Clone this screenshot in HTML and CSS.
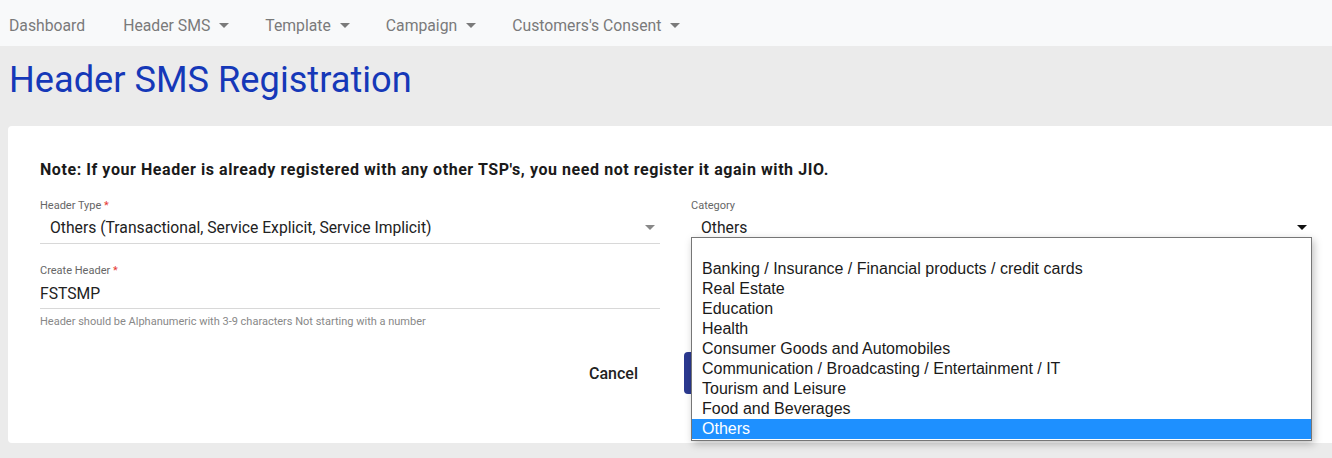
FILE: index.html
```html
<!DOCTYPE html>
<html lang="en">
<head>
  <meta charset="UTF-8" />
  <meta name="viewport" content="width=device-width, initial-scale=1" />
  <title>Header SMS Registration</title>
  <link rel="stylesheet" href="styles.css">
</head>
<body>
  <nav class="topnav">
    <a class="nav-item first">Dashboard</a>
    <a class="nav-item dropdown">Header SMS</a>
    <a class="nav-item dropdown">Template</a>
    <a class="nav-item dropdown">Campaign</a>
    <a class="nav-item dropdown">Customers's Consent</a>
  </nav>

  <h1 class="page-title">Header SMS Registration</h1>

  <div class="card">
    <p class="note">Note: If your Header is already registered with any other TSP's, you need not register it again with JIO.</p>

    <div class="form-grid">
      <div class="field">
        <label class="field-label">Header Type <span class="req">*</span></label>
        <div class="select-box indent">
          <span>Others (Transactional, Service Explicit, Service Implicit)</span>
          <span class="caret grey"></span>
        </div>
      </div>

      <div class="field category">
        <label class="field-label">Category</label>
        <div class="select-box indent plain">
          <span>Others</span>
          <span class="caret dark"></span>
        </div>

        <!-- open list of the category select -->
        <ul class="option-list">
          <li>&nbsp;</li>
          <li>Banking / Insurance / Financial products / credit cards</li>
          <li>Real Estate</li>
          <li>Education</li>
          <li>Health</li>
          <li>Consumer Goods and Automobiles</li>
          <li>Communication / Broadcasting / Entertainment / IT</li>
          <li>Tourism and Leisure</li>
          <li>Food and Beverages</li>
          <li class="selected">Others</li>
        </ul>
      </div>

      <div class="field">
        <label class="field-label">Create Header <span class="req">*</span></label>
        <div class="text-box">
          <span>FSTSMP</span>
        </div>
        <small class="help">Header should be Alphanumeric with 3-9 characters Not starting with a number</small>
      </div>
      <div></div>
    </div>

    <div class="actions">
      <button class="btn-cancel">Cancel</button>
      <button class="btn-submit" aria-label="Submit"></button>
    </div>
  </div>
</body>
</html>
```

FILE: styles.css
```css
* {
  margin: 0;
  padding: 0;
  box-sizing: border-box;
}

body {
  background: #ebebeb;
  font-family: Roboto, 'Liberation Sans', sans-serif;
  color: #212529;
  height: 100vh;
  overflow: hidden;
}

.topnav {
  display: flex;
  align-items: center;
  height: 46px;
  background: #f8f9fa;
  padding: 5px 0 0 9px;
  gap: 36px;
}

.nav-item {
  font-size: 15.75px;
  color: #7a7a7a;
  display: flex;
  align-items: center;
}

.nav-item.first {
  margin-right: 2px;
}

.nav-item.dropdown::after {
  content: '';
  margin-left: 9px;
  border-top: 5px solid #7a7a7a;
  border-left: 5px solid transparent;
  border-right: 5px solid transparent;
}

.page-title {
  font-size: 36.2px;
  font-weight: 400;
  color: #1538b8;
  padding: 12px 0 0 9px;
  height: 80px;
}

.card {
  background: #fff;
  margin-left: 8px;
  border-radius: 4px 0 0 4px;
  padding: 34px 20px 0 32px;
  height: 317px;
}

.note {
  font-size: 16px;
  font-weight: 700;
  letter-spacing: 0.57px;
  color: #1a1a1a;
  margin-bottom: 20px;
}

.form-grid {
  display: grid;
  grid-template-columns: 620px 621px;
  column-gap: 31px;
  row-gap: 20px;
}

.field {
  position: relative;
}

.field-label {
  display: block;
  font-size: 11px;
  color: #666;
  margin-bottom: 3px;
}

.req {
  color: #e53935;
}

.select-box,
.text-box {
  display: flex;
  justify-content: space-between;
  align-items: center;
  font-size: 15.7px;
  color: #222;
  border-bottom: 1px solid #d8d8d8;
}

.select-box {
  height: 29px;
  padding-bottom: 3px;
}

.text-box {
  height: 29px;
  padding-bottom: 2px;
}

.select-box.indent {
  padding-left: 10px;
}

.select-box.plain {
  border-bottom-color: transparent;
}

.caret {
  border-top: 5px solid #888;
  border-left: 5px solid transparent;
  border-right: 5px solid transparent;
  margin-right: 5px;
}

.caret.dark {
  border-top-color: #111;
}

.help {
  display: block;
  font-size: 11px;
  color: #888;
  margin-top: 6px;
}

/* open dropdown list drawn over the form */
.option-list {
  position: absolute;
  top: 38px;
  left: 0;
  width: 621px;
  padding: 1px 0;
  list-style: none;
  background: #fff;
  border: 1px solid #767676;
  box-shadow: 2px 3px 8px rgba(0, 0, 0, 0.25);
  z-index: 5;
}

.option-list li {
  height: 20px;
  line-height: 20px;
  padding-left: 10px;
  font-family: 'Liberation Sans', Arial, sans-serif;
  font-size: 16px;
  color: #1a1a1a;
}

.option-list li.selected {
  background: #1e90ff;
  color: #fff;
}

.actions {
  display: flex;
  justify-content: flex-end;
  align-items: center;
  gap: 46px;
  width: 760px;
  margin-top: 24px;
}

.btn-cancel {
  background: none;
  border: none;
  font-family: Roboto, sans-serif;
  font-size: 16px;
  font-weight: 500;
  color: #222;
}

.btn-submit {
  background: #2b3990;
  border: none;
  border-radius: 4px;
  height: 42px;
  width: 116px;
}
```
